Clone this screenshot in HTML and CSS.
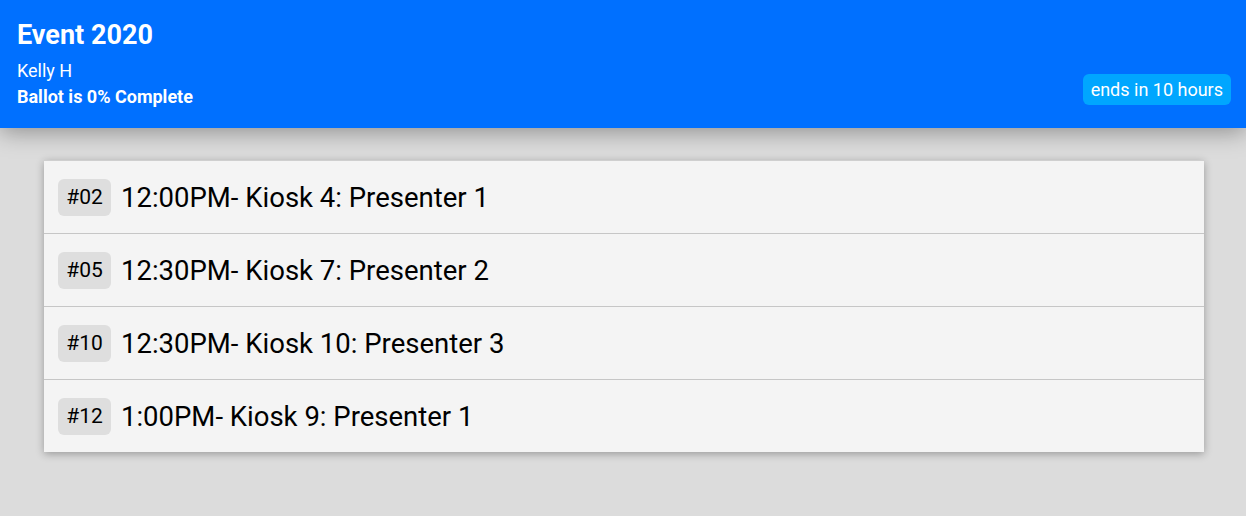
FILE: index.html
```html
<!DOCTYPE html>
<html>
<head>
<meta charset="utf-8">
<link rel="stylesheet" href="styles.css">
</head>
<body>
<header class="topbar">
  <div class="info">
    <h1 class="title">Event 2020</h1>
    <div class="user">Kelly H</div>
    <div class="progress">Ballot is 0% Complete</div>
  </div>
  <div class="ends">ends in 10 hours</div>
</header>
<main class="content">
  <ul class="list">
    <li class="row"><span class="tag">#02</span><span class="label">12:00PM- Kiosk 4: Presenter 1</span></li>
    <li class="row"><span class="tag">#05</span><span class="label">12:30PM- Kiosk 7: Presenter 2</span></li>
    <li class="row"><span class="tag">#10</span><span class="label">12:30PM- Kiosk 10: Presenter 3</span></li>
    <li class="row"><span class="tag">#12</span><span class="label">1:00PM- Kiosk 9: Presenter 1</span></li>
  </ul>
</main>
</body>
</html>
```
FILE: styles.css
```css
html, body {
  margin: 0;
  padding: 0;
}
body {
  background: #dcdcdc;
  font-family: Roboto, "Liberation Sans", sans-serif;
  height: 516px;
  overflow: hidden;
}
.topbar {
  position: relative;
  z-index: 2;
  background: #0070ff;
  color: #fff;
  height: 128px;
  box-sizing: border-box;
  padding: 18px 15px 18px 17px;
  display: flex;
  justify-content: space-between;
  align-items: flex-end;
  box-shadow: 0 4px 22px rgba(0, 0, 0, 0.35);
}
.title {
  margin: 0;
  font-size: 27px;
  font-weight: 700;
  line-height: 34px;
}
.user {
  font-size: 18px;
  line-height: 26px;
  margin-top: 6px;
}
.progress {
  font-size: 18px;
  font-weight: 700;
  line-height: 26px;
}
.ends {
  background: #00a6ff;
  border-radius: 6px;
  font-size: 18px;
  line-height: 31px;
  padding: 0 8px;
  margin-bottom: 5px;
}
.content {
  padding: 32px 42px 0 44px;
}
.list {
  list-style: none;
  margin: 0;
  padding: 0;
  background: #f4f4f4;
  border-top: 1px solid #cfcfcf;
  box-shadow: 0 2px 8px rgba(0, 0, 0, 0.3);
}
.row {
  display: flex;
  align-items: center;
  height: 72px;
  padding: 0 14px;
  gap: 10px;
  border-bottom: 1px solid #c6c6c6;
}
.row:last-child {
  border-bottom: none;
}
.tag {
  background: #dedede;
  border-radius: 6px;
  font-size: 21px;
  line-height: 37px;
  width: 53px;
  text-align: center;
  color: #000;
}
.label {
  font-size: 27.5px;
  color: #000;
}
```
